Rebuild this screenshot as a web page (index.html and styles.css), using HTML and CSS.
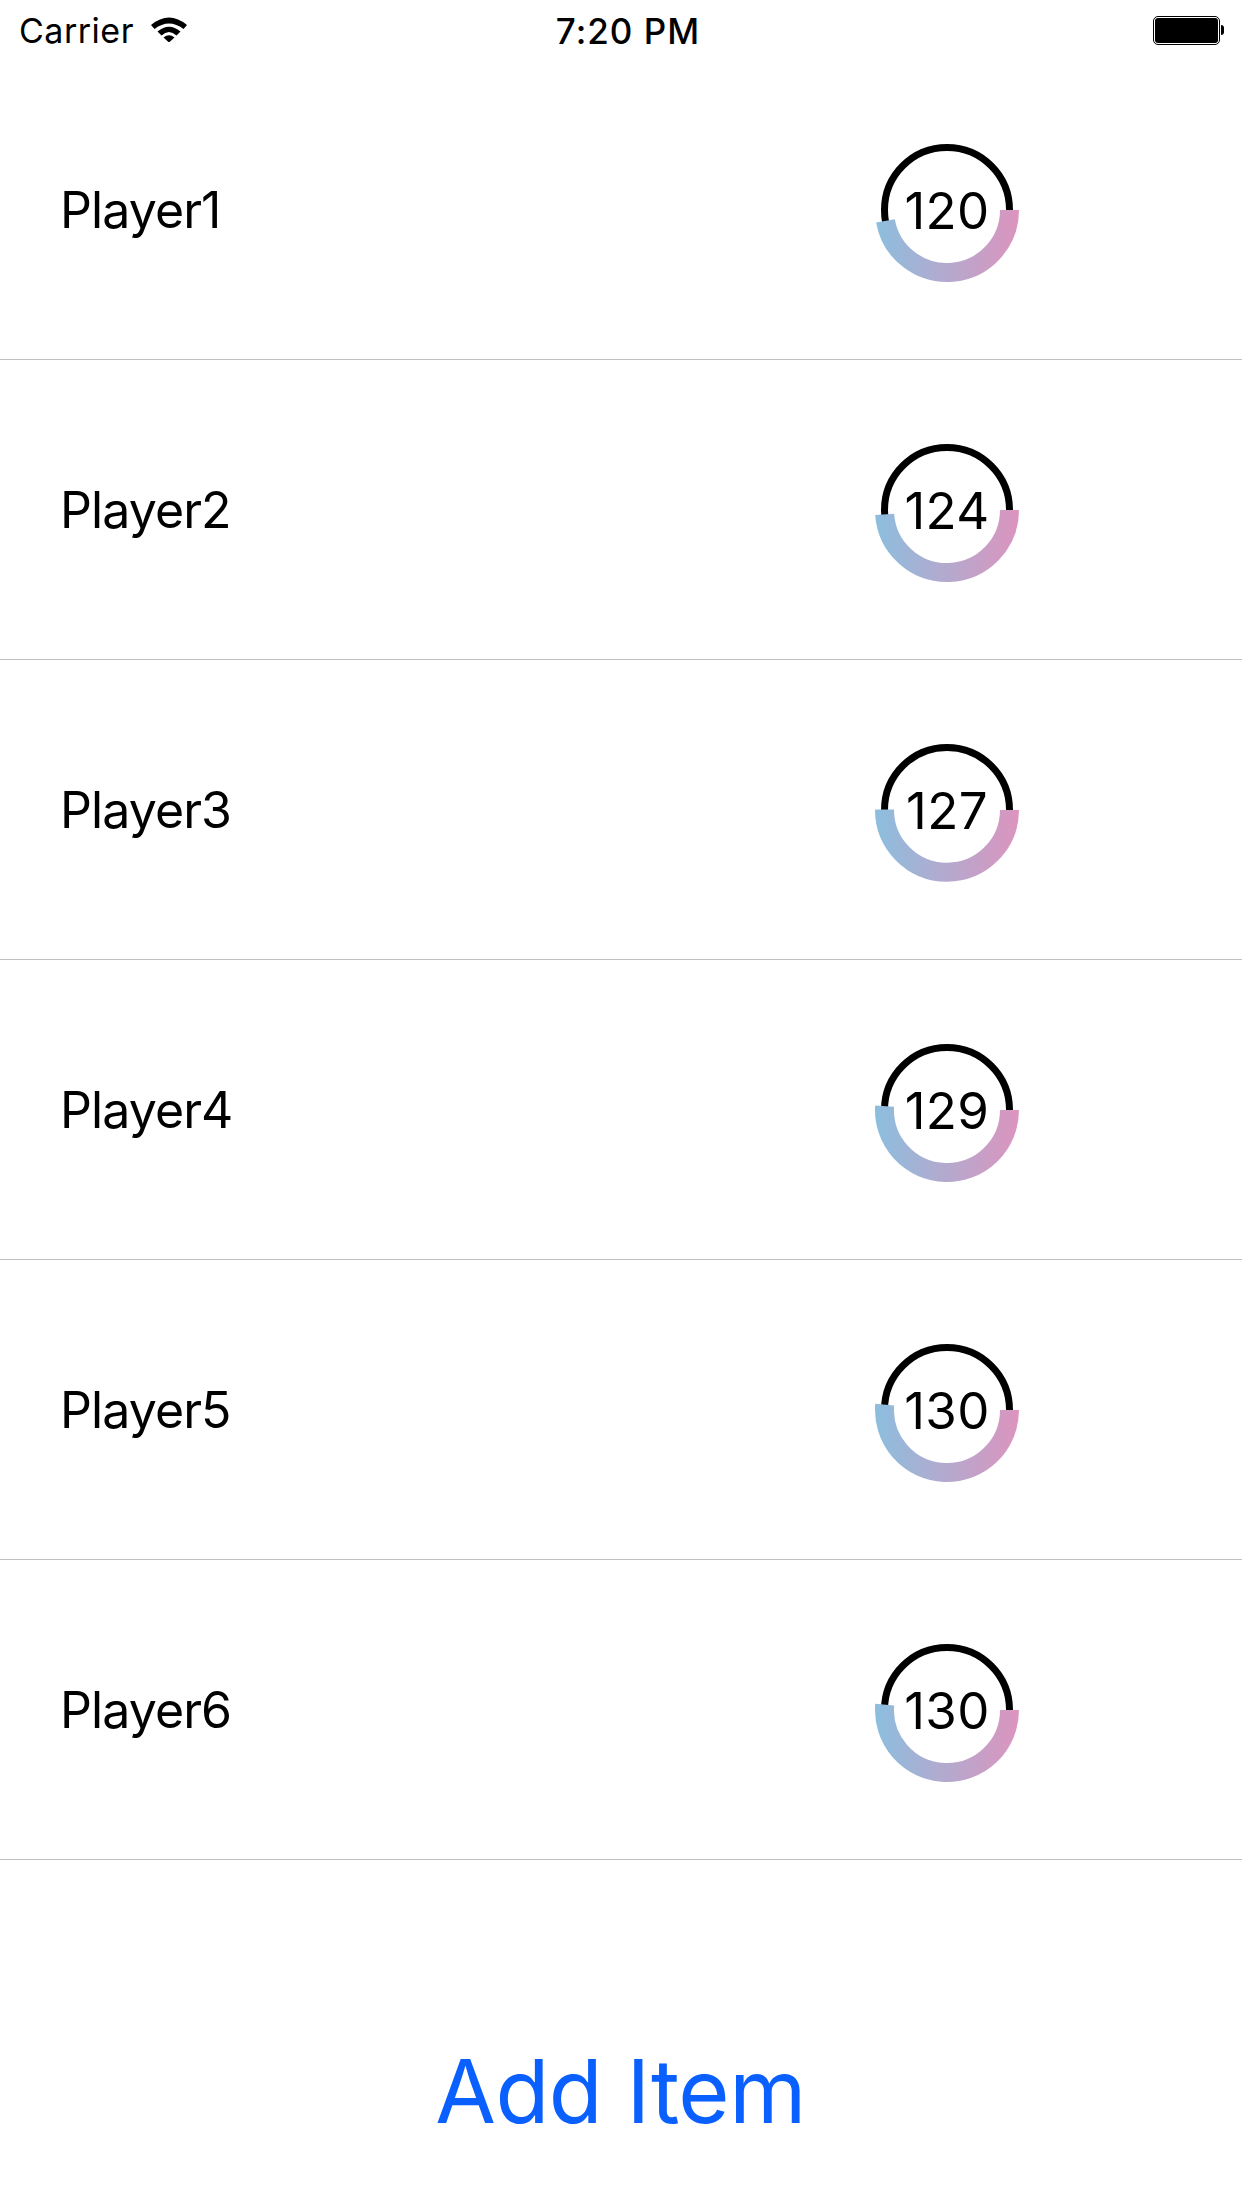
FILE: index.html
```html
<!DOCTYPE HTML>
<html>

<head>
    <title>Players</title>
    <link rel="stylesheet" href="styles.css">
</head>

<body>
    <div class='status'>
        <div class='status-left'>
            <span class='carrier'>Carrier</span>
            <svg class='wifi' width='36' height='26' viewBox='0 0 36 26'>
                <path d='M0 9 Q18 -6 36 9 L32.500 13 Q18 2 3.500 13 Z' />
                <path d='M6.500 15.500 Q18 6 29.500 15.500 L25.500 19.500 Q18 12.500 10.500 19.500 Z' />
                <path d='M12.500 21.500 Q18 17 23.500 21.500 L18 26.500 Z' />
            </svg>
        </div>
        <div class='time'>7:20 PM</div>
        <div class='status-right'>
            <div class='battery'><div class='battery-fill'></div></div>
            <div class='battery-tip'></div>
        </div>
    </div>

    <div id='list'></div>

    <div class='add'>Add Item</div>

    <script>
        var players = [
            ["Player1", 120],
            ["Player2", 124],
            ["Player3", 127],
            ["Player4", 129],
            ["Player5", 130],
            ["Player6", 130]
        ];
        var r = 62.5;
        var cx = 75;
        var cy = 75;
        var html = "";

        function pt(deg) {
            var a = deg * Math.PI / 180;
            return (cx + r * Math.cos(a)).toFixed(2) + " " + (cy + r * Math.sin(a)).toFixed(2);
        }

        for (var i = 0; i < players.length; i++) {
            // the coloured arc grows with the score
            var end = 170 + (players[i][1] - 120) * 1.5;
            var arc = "M" + pt(0) + " A" + r + " " + r + " 0 1 1 " + pt(end);
            if (end < 180) {
                arc = "M" + pt(0) + " A" + r + " " + r + " 0 0 1 " + pt(end);
            }
            html += "<div class='row'>";
            html += "<div class='name'>" + players[i][0] + "</div>";
            html += "<div class='ring'>";
            html += "<svg width='150' height='150' viewBox='0 0 150 150'>";
            html += "<defs><linearGradient id='grad" + i + "' gradientUnits='userSpaceOnUse' x1='147' y1='0' x2='3' y2='0'>";
            html += "<stop offset='0' stop-color='#dc94be'/><stop offset='1' stop-color='#8cbede'/></linearGradient></defs>";
            html += "<circle cx='75' cy='75' r='62.5' fill='none' stroke='#000' stroke-width='7'/>";
            html += "<path d='" + arc + "' fill='none' stroke='url(#grad" + i + ")' stroke-width='19'/>";
            html += "</svg>";
            html += "<div class='score'>" + players[i][1] + "</div>";
            html += "</div></div>";
        }
        document.getElementById('list').innerHTML = html;
    </script>
</body>

</html>
```

FILE: styles.css
```css
body {
    margin: 0;
    background: #fff;
    color: #000;
    font-family: Inter, "Liberation Sans", sans-serif;
}

.status {
    height: 60px;
    display: flex;
    align-items: center;
    justify-content: space-between;
    position: relative;
    padding: 0 18px 0 19px;
    box-sizing: border-box;
}

.status-left {
    display: flex;
    align-items: center;
    gap: 17px;
}

.carrier {
    font-size: 34px;
    line-height: 63px;
    letter-spacing: 0.5px;
}

.wifi {
    fill: #000;
    margin-bottom: 3px;
}

.time {
    position: absolute;
    left: 14px;
    right: 0;
    top: 0;
    text-align: center;
    font-size: 35px;
    font-weight: 500;
    line-height: 63px;
    letter-spacing: 1px;
}

.status-right {
    display: flex;
    align-items: center;
}

.battery {
    width: 67px;
    height: 29px;
    box-sizing: border-box;
    border: 1px solid #000;
    border-radius: 5px;
    padding: 1px;
}

.battery-fill {
    height: 100%;
    background: #000;
    border-radius: 3px;
}

.battery-tip {
    width: 3px;
    height: 10px;
    background: #000;
    border-radius: 0 3px 3px 0;
    margin-left: 1px;
}

.row {
    height: 300px;
    box-sizing: border-box;
    border-bottom: 1px solid #c0c0c2;
    display: flex;
    align-items: center;
    justify-content: space-between;
    padding: 0 220px 0 60px;
}

.name {
    font-size: 50px;
    letter-spacing: -0.9px;
}

.ring {
    width: 150px;
    height: 150px;
    position: relative;
}

.ring svg {
    display: block;
}

.score {
    position: absolute;
    left: 0;
    right: 0;
    top: 1px;
    text-align: center;
    font-size: 51px;
    line-height: 150px;
    letter-spacing: 0.4px;
}

.add {
    text-align: center;
    color: #0a60ff;
    font-size: 88px;
    line-height: 110px;
    margin-top: 176px;
    padding-right: 1px;
    letter-spacing: -0.5px;
}
```
